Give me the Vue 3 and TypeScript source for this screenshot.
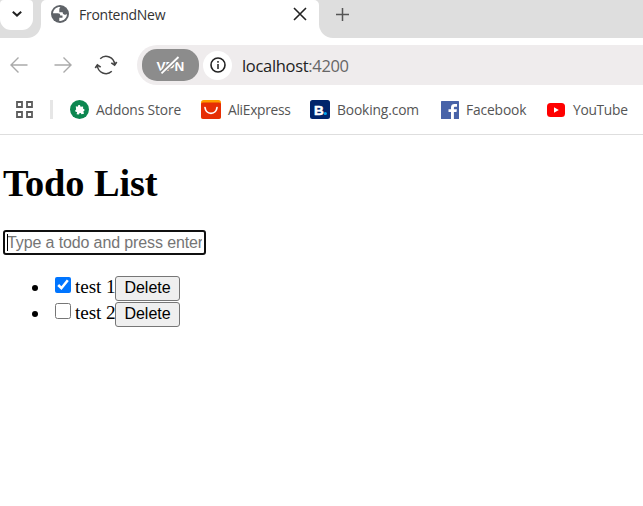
<script setup lang="ts">
import { ref } from 'vue'

interface Todo {
  id: number
  title: string
  done: boolean
}

const draft = ref('')
const todos = ref<Todo[]>([
  { id: 1, title: 'test 1', done: true },
  { id: 2, title: 'test 2', done: false },
])

function addTodo() {
  const title = draft.value.trim()
  if (!title) return
  todos.value.push({ id: Date.now(), title, done: false })
  draft.value = ''
}

function removeTodo(id: number) {
  todos.value = todos.value.filter((t) => t.id !== id)
}
</script>

<template>
  <div class="window">
    <div class="tabstrip">
      <div class="corner">
        <div class="search-tabs">
          <svg width="12" height="8" viewBox="0 0 12 8"><path d="M1.800 1.800 6 5.600l4.200-3.800" fill="none" stroke="#222" stroke-width="2" /></svg>
        </div>
      </div>
      <div class="tab">
        <svg class="globe" width="18" height="18" viewBox="0 0 18 18">
          <circle cx="9" cy="9" r="9" fill="#5f6368" />
          <path d="M9.500 2C5.500 1.700 2.300 4.500 2 8.300h4.800c1.800 0 2.400.8 2.400 2.200h2.300v2.200H8.300v3.200c4.300.5 7.600-2.800 7.700-6.800-1 .9-2.300.9-3.300.2-.8-.5-1-1.300-1-2.100H8.300V5c0-1.400.3-2.200 1.200-3z" fill="#fff" />
        </svg>
        <span class="tab-title">FrontendNew</span>
        <svg class="close" width="14" height="14" viewBox="0 0 14 14"><path d="M1 1l12 12M13 1 1 13" stroke="#222" stroke-width="1.600" /></svg>
      </div>
      <div class="strip-rest">
        <svg width="13" height="13" viewBox="0 0 13 13"><path d="M6.500 0v13M0 6.500h13" stroke="#555" stroke-width="1.500" /></svg>
      </div>
    </div>

    <div class="toolbar">
      <svg class="nav" width="18" height="18" viewBox="0 0 18 18"><path d="M17.500 9H1M8.500 1.500 1 9l7.500 7.500" fill="none" stroke="#aaa" stroke-width="1.400" /></svg>
      <svg class="nav forward" width="18" height="18" viewBox="0 0 18 18"><path d="M.5 9H17M9.500 1.500 17 9l-7.500 7.500" fill="none" stroke="#aaa" stroke-width="1.400" /></svg>
      <svg class="reload" width="24" height="20" viewBox="0 0 24 20">
        <path d="M6.200 3.700A8.600 8.600 0 0 1 20.600 9.500M17.800 16.300A8.600 8.600 0 0 1 3.400 10.500" fill="none" stroke="#444" stroke-width="1.500" />
        <path d="M17.300 7.900 20.600 10 22.700 7M6.700 12.100 3.400 10 1.300 13" fill="none" stroke="#444" stroke-width="1.700" />
      </svg>
      <div class="address">
        <div class="vpn">
          <span>VPN</span>
          <svg width="28" height="20" viewBox="0 0 28 20"><path d="M4.500 18 22 1.500" stroke="#8c8c8c" stroke-width="4.500" /><path d="M4.500 18.300 21.500 2" stroke="#fff" stroke-width="1.800" /></svg>
        </div>
        <div class="info">
          <svg width="16" height="16" viewBox="0 0 16 16"><circle cx="8" cy="8" r="7" fill="none" stroke="#222" stroke-width="1.600" /><path d="M8 7v5M8 4v1.700" stroke="#222" stroke-width="1.500" /></svg>
        </div>
        <span class="url">localhost<i>:4200</i></span>
      </div>
    </div>

    <div class="bookmarks">
      <svg class="apps" width="17" height="17" viewBox="0 0 17 17"><path d="M1 1h5v5H1zM11 1h5v5h-5zM1 11h5v5H1zM11 11h5v5h-5z" fill="none" stroke="#5c5c5c" stroke-width="1.800" /></svg>
      <div class="separator"></div>
      <a class="mark addons">
        <svg width="19" height="19" viewBox="0 0 19 19"><circle cx="9.500" cy="9.500" r="9.500" fill="#0c8750" /><path d="M5.800 6.300l2 .5c-.2-2.500 2.800-2.400 2.700-.1l2.600-.2v2.300c1.900.1 1.900 2.500.2 2.500l.7 2.400-2.600.5c-.5-1.900-2.500-1.500-2.300.3l-2.500-.3.5-2.300c-2 .3-2.600-1.700-1-2.500z" fill="#fff" /></svg>
        <span>Addons Store</span>
      </a>
      <a class="mark ali">
        <svg width="20" height="19" viewBox="0 0 20 19"><rect width="20" height="19" rx="2.500" fill="#ff9b00" /><path d="M0 4q0-1.500 2-1.500h16q2 0 2 1.500v12.500q0 2.500-2.500 2.500h-15Q0 19 0 16.500z" fill="#e62e04" /><path d="M4 7.500c1 7.700 11 7.700 12 0" fill="none" stroke="#fff" stroke-width="1.700" stroke-linecap="round" /></svg>
        <span>AliExpress</span>
      </a>
      <a class="mark booking">
        <svg width="20" height="19" viewBox="0 0 20 19"><rect width="20" height="19" rx="2.500" fill="#00246b" /><text x="4" y="15" fill="#fff" stroke="#fff" stroke-width=".5" font-family="Liberation Sans, sans-serif" font-size="13.500" font-weight="700">B</text><circle cx="15.300" cy="13.500" r="1.600" fill="#00a5ed" /></svg>
        <span>Booking.com</span>
      </a>
      <a class="mark facebook">
        <svg width="18" height="18" viewBox="0 0 18 18"><rect width="18" height="18" rx=".5" fill="#4863a8" /><path d="M10 18v-7H7.500V8.200H10V6.500C10 4 11.300 3 13.500 3H16v2.700h-1.800c-1 0-1.300.5-1.300 1.300v1.200h3l-.4 2.800h-2.600v7z" fill="#fff" /></svg>
        <span>Facebook</span>
      </a>
      <a class="mark youtube">
        <svg width="18" height="14" viewBox="0 0 18 14"><rect width="18" height="14" rx="3.500" fill="#f00" /><path d="M7 4.200v5.600L11.800 7z" fill="#fff" /></svg>
        <span>YouTube</span>
      </a>
    </div>

    <main class="page">
      <h1>Todo List</h1>
      <div class="field">
        <span class="caret"></span>
        <input v-model="draft" type="text" placeholder="Type a todo and press enter" @keyup.enter="addTodo" />
      </div>
      <ul>
        <li v-for="todo in todos" :key="todo.id">
          <input v-model="todo.done" type="checkbox" /><span class="name">{{ todo.title }}</span><button @click="removeTodo(todo.id)">Delete</button>
        </li>
      </ul>
    </main>
  </div>
</template>

<style>
body {
  margin: 0;
  background: #fff;
}
</style>

<style scoped>
.window {
  width: 643px;
  height: 506px;
  overflow: hidden;
  background: #fff;
  font-family: 'Open Sans', 'Noto Sans', sans-serif;
}
svg {
  display: block;
  flex: none;
}
.tabstrip {
  display: flex;
  height: 38px;
  background: linear-gradient(#dedede 14px, #fff 14px);
}
.corner {
  width: 41px;
  background: #dedede;
  border-bottom-right-radius: 14px;
}
.search-tabs {
  display: flex;
  align-items: center;
  justify-content: center;
  box-sizing: border-box;
  width: 33px;
  height: 30px;
  padding: 0 0 2px 1px;
  background: #fff;
  border-radius: 4px 4px 11px 11px;
}
.tab {
  display: flex;
  align-items: flex-start;
  box-sizing: border-box;
  width: 278px;
  height: 38px;
  padding: 5px 12px 0 10px;
  background: #fff;
  border-radius: 5px 5px 0 0;
}
.tab-title {
  margin: 0 0 0 10px;
  color: #333;
  font-size: 14px;
  line-height: 20px;
  letter-spacing: -0.27px;
}
.close {
  margin: 2px 0 0 auto;
}
.strip-rest {
  flex: 1;
  padding: 8px 0 0 17px;
  background: #dedede;
  border-bottom-left-radius: 14px;
}
.toolbar {
  display: flex;
  align-items: center;
  height: 54px;
  padding-left: 10px;
}
.forward {
  margin-left: 26px;
}
.reload {
  margin-left: 22px;
}
.address {
  display: flex;
  flex: 1;
  align-items: center;
  box-sizing: border-box;
  height: 40px;
  margin-left: 19px;
  padding-left: 5px;
  background: #efeced;
  border-radius: 20px 0 0 20px;
}
.vpn {
  display: grid;
  place-items: center;
  width: 57px;
  height: 32px;
  background: #8c8c8c;
  border-radius: 15px;
}
.vpn > * {
  grid-area: 1 / 1;
}
.vpn span {
  padding-top: 2px;
  color: #fff;
  font: 700 13.5px 'Liberation Sans', sans-serif;
}
.info {
  display: grid;
  place-items: center;
  width: 29px;
  height: 29px;
  margin-left: 4px;
  background: #fff;
  border-radius: 50%;
}
.url {
  margin-left: 10px;
  color: #222;
  font-size: 16.5px;
  letter-spacing: -0.32px;
}
.url i {
  color: #666;
  font-style: normal;
}
.bookmarks {
  display: flex;
  align-items: center;
  box-sizing: border-box;
  height: 43px;
  padding: 0 0 7px 16px;
  border-bottom: 1px solid #dedede;
}
.separator {
  width: 3px;
  height: 19px;
  margin: 0 17px 0 17px;
  background: #e6e6e6;
}
.mark {
  display: flex;
  flex: none;
  align-items: center;
  gap: 7px;
  color: #555;
  font-size: 13.8px;
  line-height: 20px;
  letter-spacing: -0.14px;
  white-space: nowrap;
}
.addons {
  width: 131px;
}
.ali {
  width: 109px;
}
.ali span {
  letter-spacing: -0.3px;
}
.booking {
  width: 131px;
}
.facebook {
  width: 106px;
}
.youtube {
  gap: 8px;
  letter-spacing: -0.3px;
}
.page {
  padding: 0 3px;
  color: #000;
  font: 19.2px 'Liberation Serif', serif;
}
h1 {
  margin: 0;
  padding-top: 26px;
  font-size: 38.4px;
  font-weight: 700;
  line-height: 44px;
  letter-spacing: -0.1px;
}
.field {
  position: relative;
  width: 203px;
  height: 25px;
  margin-top: 25px;
}
.field input {
  display: block;
  box-sizing: border-box;
  width: 100%;
  height: 100%;
  margin: 0;
  padding: 0 2px;
  border: 2px solid #101010;
  border-radius: 3px;
  outline: none;
  font: 16px 'Liberation Sans', sans-serif;
  letter-spacing: -0.12px;
}
.field input::placeholder {
  color: #757575;
}
.caret {
  position: absolute;
  top: 4px;
  left: 4px;
  width: 1px;
  height: 17px;
  background: #000;
}
ul {
  margin: 19px 0 0;
  padding-left: 47px;
}
li {
  height: 26px;
  line-height: 26px;
  white-space: nowrap;
}
li input {
  width: 16px;
  height: 16px;
  margin: 0 4px 0 5px;
  vertical-align: 0;
}
.name {
  display: inline-block;
  width: 40px;
  letter-spacing: -0.1px;
}
button {
  box-sizing: border-box;
  width: 65px;
  height: 25px;
  padding: 0;
  color: #000;
  background: #efefef;
  border: 1px solid #767676;
  border-radius: 3px;
  font: 16px 'Liberation Sans', sans-serif;
  vertical-align: baseline;
}
</style>
